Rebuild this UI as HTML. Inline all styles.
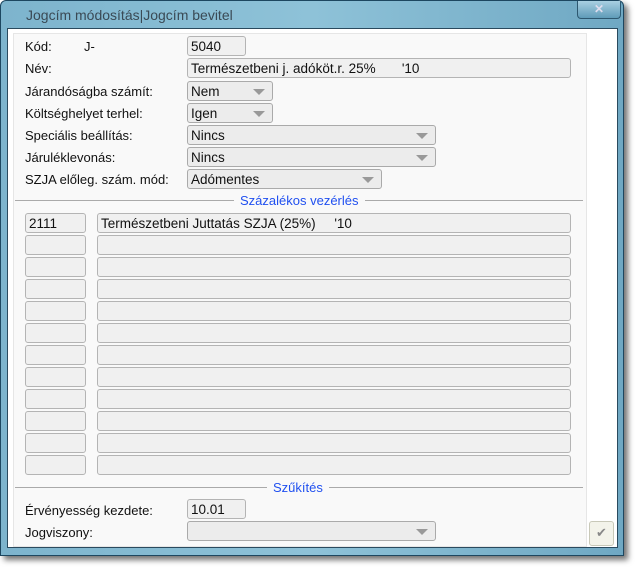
<!DOCTYPE html>
<html><head><meta charset="utf-8"><style>
body{margin:0;width:637px;height:569px;background:#fff;position:relative;overflow:hidden;font-family:"Liberation Sans",sans-serif;font-size:13px;color:#111}
.win{position:absolute;left:0;top:0;width:622px;height:554px;background:linear-gradient(90deg,#7db4cd,#8ec2d8 50%,#6fa8c3);border:1px solid #1d4760;border-radius:6px 6px 0 0;box-shadow:4px 4px 6px rgba(0,0,0,.55)}
.title{position:absolute;left:25px;top:6px;font-size:14px;color:#3a4a55}
.close{position:absolute;left:576px;top:0;width:42px;height:17px;border:1px solid #2d5870;border-top:none;border-radius:0 0 4px 4px;background:linear-gradient(#a9d0e2,#5f9bb8);color:#dde;text-align:center;font-size:12px;line-height:16px;font-weight:bold}
.client{position:absolute;left:7px;top:28px;width:609px;height:518px;background:#fff;border:1px solid #2a4a5e}
.panel{position:absolute;left:13px;top:33px;width:572px;height:512px;background:#f9f9f9;border:1px solid #e6e6e6}
.l{position:absolute;left:25px;white-space:nowrap}
.f{position:absolute;height:18px;background:#f0f0f0;border:1px solid #b4b4b4;border-radius:3px;padding-left:3px;line-height:19px;white-space:pre;box-sizing:content-box;font-size:13.5px}
.c{position:absolute;height:18px;background:#ececec;border:1px solid #aaa;border-radius:3px;padding-left:3px;line-height:19px;font-size:13.5px}
.c:after{content:"";position:absolute;right:7px;top:7px;border-left:6px solid transparent;border-right:6px solid transparent;border-top:6px solid #999}
.sep{position:absolute;left:15px;width:568px;height:1px;background:#aaa}
.st{position:absolute;color:#2050f0;background:#f9f9f9;padding:0 6px}
.btn{position:absolute;left:589px;top:521px;width:23px;height:23px;border:1px solid #c8c8b8;border-radius:3px;background:#f3f3ea;color:#888;text-align:center;line-height:22px;font-size:13px}
</style></head><body>
<div class="win"><div class="title">Jogcím módosítás|Jogcím bevitel</div><div class="close">✕</div></div>
<div class="client"></div>
<div class="panel"></div>
<div class="l" style="top:39px">Kód:</div><div class="l" style="left:84px;top:39px">J-</div>
<div class="f" style="left:187px;top:36px;width:54px">5040</div>
<div class="l" style="top:61px">Név:</div>
<div class="f" style="left:187px;top:58px;width:379px">Természetbeni j. adóköt.r. 25%       '10</div>
<div class="l" style="top:84px">Járandóságba számít:</div>
<div class="c" style="left:187px;top:81px;width:81px">Nem</div>
<div class="l" style="top:106px">Költséghelyet terhel:</div>
<div class="c" style="left:187px;top:103px;width:81px">Igen</div>
<div class="l" style="top:128px">Speciális beállítás:</div>
<div class="c" style="left:187px;top:125px;width:244px">Nincs</div>
<div class="l" style="top:150px">Járuléklevonás:</div>
<div class="c" style="left:187px;top:147px;width:244px">Nincs</div>
<div class="l" style="top:172px">SZJA előleg. szám. mód:</div>
<div class="c" style="left:187px;top:169px;width:190px">Adómentes</div>
<div class="sep" style="top:200px"></div><div class="st" style="left:234px;top:193px">Százalékos vezérlés</div>
<div class="sep" style="top:487px"></div><div class="st" style="left:267px;top:480px">Szűkítés</div>
<div class="l" style="top:503px">Érvényesség kezdete:</div>
<div class="f" style="left:187px;top:499px;width:54px">10.01</div>
<div class="l" style="top:525px">Jogviszony:</div>
<div class="c" style="left:187px;top:521px;width:244px"></div>
<div class="btn">✔</div>
<div class="f" style="left:25px;top:213px;width:56px">2111</div>
<div class="f" style="left:97px;top:213px;width:469px">Természetbeni Juttatás SZJA (25%)     '10</div>
<div class="f" style="left:25px;top:235px;width:56px"></div><div class="f" style="left:97px;top:235px;width:469px"></div>
<div class="f" style="left:25px;top:257px;width:56px"></div><div class="f" style="left:97px;top:257px;width:469px"></div>
<div class="f" style="left:25px;top:279px;width:56px"></div><div class="f" style="left:97px;top:279px;width:469px"></div>
<div class="f" style="left:25px;top:301px;width:56px"></div><div class="f" style="left:97px;top:301px;width:469px"></div>
<div class="f" style="left:25px;top:323px;width:56px"></div><div class="f" style="left:97px;top:323px;width:469px"></div>
<div class="f" style="left:25px;top:345px;width:56px"></div><div class="f" style="left:97px;top:345px;width:469px"></div>
<div class="f" style="left:25px;top:367px;width:56px"></div><div class="f" style="left:97px;top:367px;width:469px"></div>
<div class="f" style="left:25px;top:389px;width:56px"></div><div class="f" style="left:97px;top:389px;width:469px"></div>
<div class="f" style="left:25px;top:411px;width:56px"></div><div class="f" style="left:97px;top:411px;width:469px"></div>
<div class="f" style="left:25px;top:433px;width:56px"></div><div class="f" style="left:97px;top:433px;width:469px"></div>
<div class="f" style="left:25px;top:455px;width:56px"></div><div class="f" style="left:97px;top:455px;width:469px"></div>
</body></html>
